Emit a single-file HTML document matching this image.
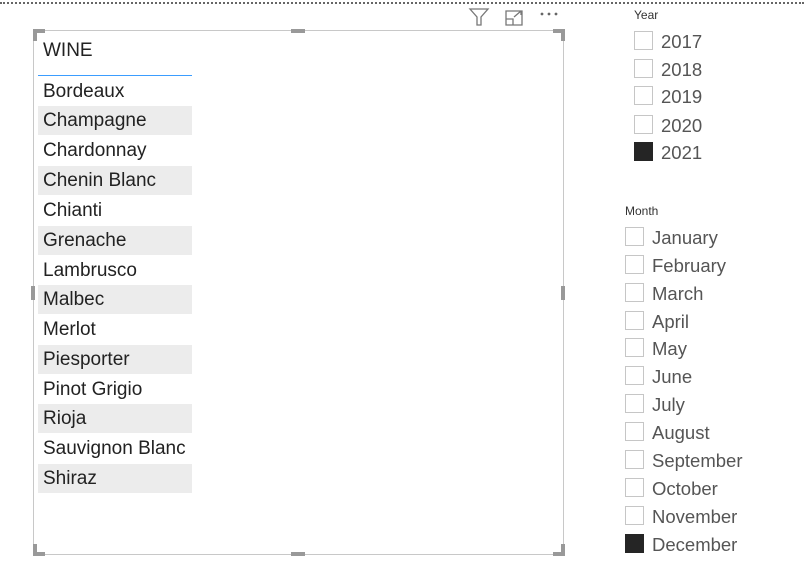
<!DOCTYPE html><html><head><style>
body{margin:0;width:804px;height:588px;background:#fff;position:relative;font-family:"Liberation Sans",sans-serif;overflow:hidden}
.a{position:absolute}
.dot{left:0;top:2px;width:804px;border-top:2px dotted #666}
.box{left:33px;top:30px;width:531px;height:525px;border:1px solid #c8c8c8;box-sizing:border-box}
.row{position:absolute;left:38px;width:154px;height:29px;font-size:19px;color:#222;line-height:29px;padding-left:5px;box-sizing:border-box;white-space:nowrap}
.g{background:#ececec}
.cb{position:absolute;width:17px;height:17px;border:1px solid #c6c6c6;background:#fff}
.cb.on{background:#252525;border-color:#252525}
.t{position:absolute;font-size:18.5px;color:#555;line-height:20px}
</style></head><body>
<div class="a dot"></div>
<div class="a box"></div>
<div class="a" style="left:33px;top:29px;width:12px;height:4px;background:#999"></div>
<div class="a" style="left:33px;top:29px;width:4px;height:12px;background:#999"></div>
<div class="a" style="left:553px;top:29px;width:12px;height:4px;background:#999"></div>
<div class="a" style="left:561px;top:29px;width:4px;height:12px;background:#999"></div>
<div class="a" style="left:33px;top:552px;width:12px;height:4px;background:#999"></div>
<div class="a" style="left:33px;top:544px;width:4px;height:12px;background:#999"></div>
<div class="a" style="left:553px;top:552px;width:12px;height:4px;background:#999"></div>
<div class="a" style="left:561px;top:544px;width:4px;height:12px;background:#999"></div>
<div class="a" style="left:291px;top:29px;width:14px;height:4px;background:#999"></div>
<div class="a" style="left:291px;top:552px;width:14px;height:4px;background:#999"></div>
<div class="a" style="left:31px;top:286px;width:4px;height:14px;background:#999"></div>
<div class="a" style="left:561px;top:286px;width:4px;height:14px;background:#999"></div>
<svg class="a" style="left:468px;top:6px" width="100" height="20"><path d="M2 3H20L13 11V19H9V11Z" fill="none" stroke="#777" stroke-width="1.3"/><path d="M38 5H54V19H38ZM38 13H45V19M46 11L53 5M49 5H53V9" fill="none" stroke="#777" stroke-width="1.3"/><circle cx="74" cy="8" r="1.4" fill="#666"/><circle cx="81" cy="8" r="1.4" fill="#666"/><circle cx="88" cy="8" r="1.4" fill="#666"/></svg>
<div class="a" style="left:43px;top:40px;font-size:19px;color:#222">WINE</div>
<div class="a" style="left:38px;top:75px;width:154px;height:1px;background:#3b9dff"></div>
<div class="row" style="top:77px">Bordeaux</div>
<div class="row g" style="top:106px">Champagne</div>
<div class="row" style="top:136px">Chardonnay</div>
<div class="row g" style="top:166px">Chenin Blanc</div>
<div class="row" style="top:196px">Chianti</div>
<div class="row g" style="top:226px">Grenache</div>
<div class="row" style="top:256px">Lambrusco</div>
<div class="row g" style="top:285px">Malbec</div>
<div class="row" style="top:315px">Merlot</div>
<div class="row g" style="top:345px">Piesporter</div>
<div class="row" style="top:375px">Pinot Grigio</div>
<div class="row g" style="top:404px">Rioja</div>
<div class="row" style="top:434px">Sauvignon Blanc</div>
<div class="row g" style="top:464px">Shiraz</div>
<div class="a" style="left:634px;top:8px;font-size:12px;color:#333">Year</div>
<div class="cb" style="left:634px;top:31px"></div><div class="t" style="left:661px;top:32px">2017</div>
<div class="cb" style="left:634px;top:59px"></div><div class="t" style="left:661px;top:60px">2018</div>
<div class="cb" style="left:634px;top:86px"></div><div class="t" style="left:661px;top:87px">2019</div>
<div class="cb" style="left:634px;top:115px"></div><div class="t" style="left:661px;top:116px">2020</div>
<div class="cb on" style="left:634px;top:142px"></div><div class="t" style="left:661px;top:143px">2021</div>
<div class="a" style="left:625px;top:204px;font-size:12px;color:#333">Month</div>
<div class="cb" style="left:625px;top:227px"></div><div class="t" style="left:652px;top:228px">January</div>
<div class="cb" style="left:625px;top:255px"></div><div class="t" style="left:652px;top:256px">February</div>
<div class="cb" style="left:625px;top:283px"></div><div class="t" style="left:652px;top:284px">March</div>
<div class="cb" style="left:625px;top:311px"></div><div class="t" style="left:652px;top:312px">April</div>
<div class="cb" style="left:625px;top:338px"></div><div class="t" style="left:652px;top:339px">May</div>
<div class="cb" style="left:625px;top:366px"></div><div class="t" style="left:652px;top:367px">June</div>
<div class="cb" style="left:625px;top:394px"></div><div class="t" style="left:652px;top:395px">July</div>
<div class="cb" style="left:625px;top:422px"></div><div class="t" style="left:652px;top:423px">August</div>
<div class="cb" style="left:625px;top:450px"></div><div class="t" style="left:652px;top:451px">September</div>
<div class="cb" style="left:625px;top:478px"></div><div class="t" style="left:652px;top:479px">October</div>
<div class="cb" style="left:625px;top:506px"></div><div class="t" style="left:652px;top:507px">November</div>
<div class="cb on" style="left:625px;top:534px"></div><div class="t" style="left:652px;top:535px">December</div>
</body></html>
